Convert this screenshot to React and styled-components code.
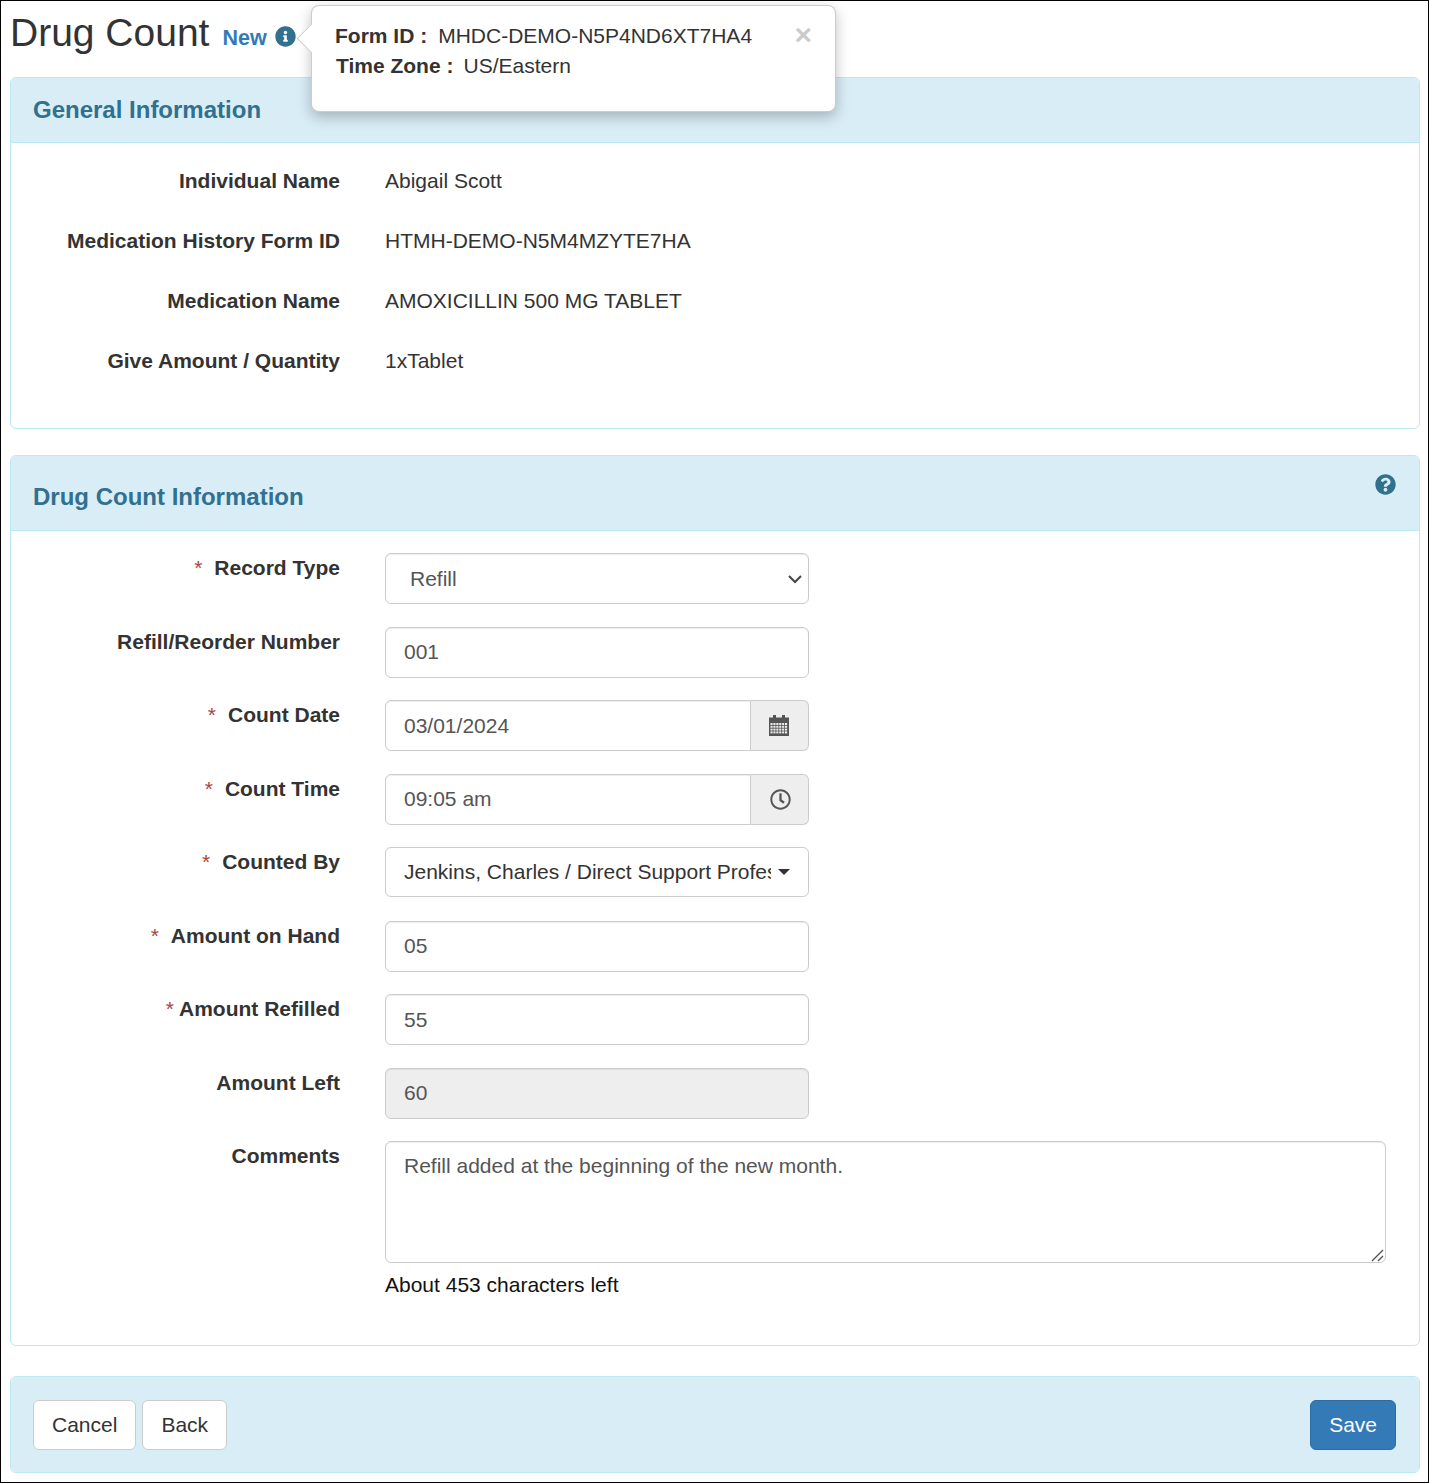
import React from "react";
import styled, { createGlobalStyle } from "styled-components";
import { FaInfoCircle, FaQuestionCircle, FaRegClock } from "react-icons/fa";

const Global = createGlobalStyle`
  html, body { margin: 0; padding: 0; background: #fff; }
  * { box-sizing: border-box; }
  body { font-family: "Liberation Sans", Arial, sans-serif; font-size: 21px; line-height: 28.6px; color: #333; }
`;

const chevron = `url("data:image/svg+xml,%3Csvg xmlns='http://www.w3.org/2000/svg' width='16' height='10' viewBox='0 0 16 10'%3E%3Cpath d='M2 2l6 6 6-6' fill='none' stroke='%23444' stroke-width='2'/%3E%3C/svg%3E")`;
const grip = `url("data:image/svg+xml,%3Csvg xmlns='http://www.w3.org/2000/svg' width='15' height='15' viewBox='0 0 15 15'%3E%3Cpath d='M2 14L13 3M8 14l5-5' fill='none' stroke='%23555' stroke-width='1.4'/%3E%3C/svg%3E")`;

const Frame = styled.div`
  position: relative;
  width: 1429px;
  height: 1483px;
  border: 1px solid #000;
  padding: 0 8px 0 9px;
  overflow: hidden;
`;
const PageHeader = styled.header`
  height: 76px;
  display: flex;
  align-items: flex-start;
  padding-top: 8px;
`;
const PageTitle = styled.h1`
  margin: 1px 0 0 0;
  font-size: 39px;
  font-weight: 400;
  line-height: 46px;
`;
const NewTag = styled.span`
  margin: 17px 0 0 13px;
  font-size: 21.5px;
  line-height: 25px;
  font-weight: 700;
  color: #337ab7;
`;
const InfoIcon = styled(FaInfoCircle)`
  margin: 17px 0 0 8px;
  font-size: 21px;
  color: #31708f;
`;
const Popover = styled.aside`
  position: absolute;
  left: 310px;
  top: 4px;
  width: 525px;
  height: 107px;
  padding: 15px 23px;
  background: #fff;
  border: 1px solid rgba(0, 0, 0, 0.2);
  border-radius: 8px;
  box-shadow: 0 5px 14px rgba(0, 0, 0, 0.25);
  line-height: 30px;
  z-index: 2;
  &::before {
    content: "";
    position: absolute;
    left: -11px;
    top: 22px;
    width: 20px;
    height: 20px;
    background: #fff;
    border-left: 1px solid rgba(0, 0, 0, 0.2);
    border-bottom: 1px solid rgba(0, 0, 0, 0.2);
    transform: rotate(45deg);
  }
`;
const PopLine = styled.div`
  display: flex;
  padding-left: ${(p) => p.$indent || 0}px;
`;
const PopKey = styled.strong`
  font-weight: 700;
  margin-right: ${(p) => p.$gap}px;
`;
const CloseX = styled.span`
  position: absolute;
  right: 23px;
  top: 14px;
  font-size: 30px;
  line-height: 30px;
  font-weight: 700;
  color: #000;
  opacity: 0.2;
`;
const Panel = styled.section`
  border: 1px solid #bce8f1;
  border-radius: 6px;
  background: #fff;
  margin-bottom: ${(p) => p.$after || 0}px;
  overflow: hidden;
`;
const PanelHead = styled.div`
  height: ${(p) => p.$h}px;
  background: #d9edf7;
  border-bottom: 1px solid #bce8f1;
  padding: ${(p) => p.$pt}px 23px 0 22px;
  display: flex;
  justify-content: space-between;
  align-items: flex-start;
`;
const PanelTitle = styled.h3`
  margin: ${(p) => p.$mt || 0}px 0 0;
  font-size: 24px;
  line-height: 26px;
  font-weight: 700;
  color: #31708f;
`;
const HelpIcon = styled(FaQuestionCircle)`
  font-size: 21px;
  color: #31708f;
`;
const InfoBody = styled.div`
  height: 285px;
  padding-top: 8px;
`;
const InfoRow = styled.div`
  height: 60px;
  display: grid;
  grid-template-columns: 329px 1fr;
  column-gap: 45px;
  align-items: center;
`;
const Label = styled.div`
  text-align: right;
  font-weight: 700;
  color: #333;
`;
const FormBody = styled.div`
  height: 814px;
  padding-top: 22px;
  display: flex;
  flex-direction: column;
  gap: 22.5px;
`;
const FormRow = styled.div`
  display: grid;
  grid-template-columns: 329px 1fr;
  column-gap: 45px;
  align-items: start;
`;
const FormLabel = styled(Label)`
  padding-top: 1px;
`;
const Star = styled.span`
  color: #a94442;
  font-weight: 400;
  margin-right: ${(p) => p.$gap}px;
`;
const fieldCss = `
  height: 51px;
  font: 21px/28.6px "Liberation Sans", Arial, sans-serif;
  color: #555;
  background: #fff;
  border: 1px solid #ccc;
  border-radius: 6px;
  box-shadow: inset 0 1px 1px rgba(0,0,0,.075);
  outline: none;
`;
const FieldCol = styled.div`
  width: 424px;
  min-height: 51px;
`;
const Select = styled.select`
  ${fieldCss}
  width: 100%;
  padding: 1px 8px 0 24px;
  appearance: none;
  background-image: ${chevron};
  background-repeat: no-repeat;
  background-position: right 5px center;
`;
const Input = styled.input`
  ${fieldCss}
  display: block;
  width: 100%;
  padding: 0 18px;
  &:read-only { background: ${(p) => (p.$locked ? "#eee" : "#fff")}; }
`;
const InputGroup = styled.div`
  display: flex;
  width: 424px;
`;
const GroupInput = styled(Input)`
  flex: 1;
  min-width: 0;
  border-radius: 6px 0 0 6px;
`;
const Addon = styled.span`
  width: 58px;
  height: 51px;
  display: flex;
  align-items: center;
  justify-content: center;
  background: #eee;
  border: 1px solid #ccc;
  border-left: 0;
  border-radius: 0 6px 6px 0;
  color: #555;
  font-size: 21px;
`;
const ClockIcon = styled(FaRegClock)`
  margin: 1px 0 0 1px;
`;
const CalendarSvg = styled.svg`
  margin: -1px 0 0 -2px;
`;
const Dropdown = styled.div`
  ${fieldCss}
  height: 50px;
  display: flex;
  align-items: center;
  padding: 0 18px;
  box-shadow: none;
  color: #333;
`;
const DropText = styled.span`
  width: 367px;
  overflow: hidden;
  white-space: nowrap;
`;
const Caret = styled.span`
  margin-left: 7px;
  border-top: 6px solid #333;
  border-left: 6px solid transparent;
  border-right: 6px solid transparent;
`;
const Textarea = styled.textarea`
  display: block;
  width: 1001px;
  height: 122px;
  font: 21px/28.6px "Liberation Sans", Arial, sans-serif;
  color: #555;
  padding: 10px 18px;
  border: 1px solid #ccc;
  border-radius: 6px;
  box-shadow: inset 0 1px 1px rgba(0,0,0,.075);
  outline: none;
  &::-webkit-resizer {
    background: ${grip} no-repeat center;
  }
`;
const HelpText = styled.div`
  margin-top: 8px;
  color: #111;
`;
const Footer = styled.div`
  height: 95px;
  background: #d9edf7;
  padding: 23px 23px 22px 22px;
  display: flex;
  justify-content: space-between;
`;
const BtnRow = styled.div`
  display: flex;
  gap: 6px;
`;
const Button = styled.button`
  height: 50px;
  padding: 0 18px;
  font: 21px/28.6px "Liberation Sans", Arial, sans-serif;
  color: ${(p) => (p.$primary ? "#fff" : "#333")};
  background: ${(p) => (p.$primary ? "#337ab7" : "#fff")};
  border: 1px solid ${(p) => (p.$primary ? "#2e6da4" : "#ccc")};
  border-radius: 6px;
`;

const CalendarIcon = () => (
  <CalendarSvg width="20" height="21" viewBox="0 0 20 21" aria-hidden="true">
    <rect x="4" y="0" width="3" height="4" fill="#555" />
    <rect x="13" y="0" width="3" height="4" fill="#555" />
    <path d="M0 2.5h20V21H0z" fill="#555" />
    {[8, 10.8, 13.6, 16.4].map((y) =>
      [1.5, 4.4, 7.3, 10.2, 13.1, 16].map((x) => (
        <rect key={`${x}-${y}`} x={x} y={y} width="2.1" height="2" fill="#eee" />
      ))
    )}
  </CalendarSvg>
);

const infoRows = [
  ["Individual Name", "Abigail Scott"],
  ["Medication History Form ID", "HTMH-DEMO-N5M4MZYTE7HA"],
  ["Medication Name", "AMOXICILLIN 500 MG TABLET"],
  ["Give Amount / Quantity", "1xTablet"],
];

const Req = ({ gap, children }) => (
  <FormLabel>
    {gap != null && <Star $gap={gap}>*</Star>}
    {children}
  </FormLabel>
);

export default function App() {
  return (
    <Frame>
      <Global />
      <PageHeader>
        <PageTitle>Drug Count</PageTitle>
        <NewTag>New</NewTag>
        <InfoIcon />
      </PageHeader>
      <Popover>
        <PopLine>
          <PopKey $gap={11}>Form ID :</PopKey>
          <span>MHDC-DEMO-N5P4ND6XT7HA4</span>
        </PopLine>
        <PopLine $indent={1}>
          <PopKey $gap={10}>Time Zone :</PopKey>
          <span>US/Eastern</span>
        </PopLine>
        <CloseX>×</CloseX>
      </Popover>

      <Panel $after={26}>
        <PanelHead $h={65} $pt={19}>
          <PanelTitle>General Information</PanelTitle>
        </PanelHead>
        <InfoBody>
          {infoRows.map(([k, v]) => (
            <InfoRow key={k}>
              <Label>{k}</Label>
              <div>{v}</div>
            </InfoRow>
          ))}
        </InfoBody>
      </Panel>

      <Panel $after={30}>
        <PanelHead $h={75} $pt={18}>
          <PanelTitle $mt={10}>Drug Count Information</PanelTitle>
          <HelpIcon />
        </PanelHead>
        <FormBody>
          <FormRow>
            <Req gap={12}>Record Type</Req>
            <FieldCol>
              <Select defaultValue="Refill">
                <option>Refill</option>
                <option>Reorder</option>
              </Select>
            </FieldCol>
          </FormRow>
          <FormRow>
            <Req>Refill/Reorder Number</Req>
            <FieldCol>
              <Input defaultValue="001" />
            </FieldCol>
          </FormRow>
          <FormRow>
            <Req gap={12}>Count Date</Req>
            <InputGroup>
              <GroupInput defaultValue="03/01/2024" />
              <Addon>
                <CalendarIcon />
              </Addon>
            </InputGroup>
          </FormRow>
          <FormRow>
            <Req gap={12}>Count Time</Req>
            <InputGroup>
              <GroupInput defaultValue="09:05 am" />
              <Addon>
                <ClockIcon />
              </Addon>
            </InputGroup>
          </FormRow>
          <FormRow>
            <Req gap={12}>Counted By</Req>
            <FieldCol>
              <Dropdown>
                <DropText>Jenkins, Charles / Direct Support Professional</DropText>
                <Caret />
              </Dropdown>
            </FieldCol>
          </FormRow>
          <FormRow>
            <Req gap={12}>Amount on Hand</Req>
            <FieldCol>
              <Input defaultValue="05" />
            </FieldCol>
          </FormRow>
          <FormRow>
            <Req gap={5}>Amount Refilled</Req>
            <FieldCol>
              <Input defaultValue="55" />
            </FieldCol>
          </FormRow>
          <FormRow>
            <Req>Amount Left</Req>
            <FieldCol>
              <Input $locked readOnly value="60" />
            </FieldCol>
          </FormRow>
          <FormRow>
            <Req>Comments</Req>
            <div>
              <Textarea defaultValue="Refill added at the beginning of the new month." />
              <HelpText>About 453 characters left</HelpText>
            </div>
          </FormRow>
        </FormBody>
      </Panel>

      <Panel>
        <Footer>
          <BtnRow>
            <Button>Cancel</Button>
            <Button>Back</Button>
          </BtnRow>
          <Button $primary>Save</Button>
        </Footer>
      </Panel>
    </Frame>
  );
}
